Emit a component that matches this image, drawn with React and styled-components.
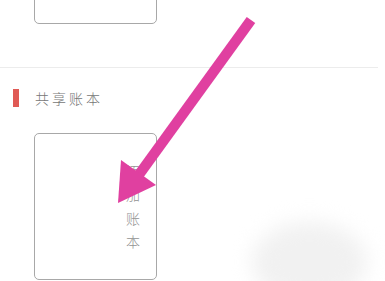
import React from 'react';
import styled, { createGlobalStyle } from 'styled-components';

const GlobalStyle = createGlobalStyle`
  html, body {
    margin: 0;
    padding: 0;
    background: #fff;
    overflow: hidden;
  }
  body {
    font-family: "Noto Sans CJK SC", "Noto Sans", sans-serif;
  }
`;

const Page = styled.div`
  position: relative;
  width: 385px;
  height: 281px;
  overflow: hidden;
  background: #fff;
`;

const Section = styled.section`
  width: 378px;
  padding-left: 34px;
  box-sizing: border-box;
  border-bottom: ${p => (p.$divider ? '1px solid #ececec' : 'none')};
  padding-bottom: ${p => p.$bottom || 0}px;
`;

const BookCard = styled.div`
  width: 123px;
  height: ${p => p.$height}px;
  margin-top: ${p => p.$top}px;
  border: 1px solid #a8a8a8;
  border-radius: 5px;
  box-sizing: border-box;
  display: flex;
  justify-content: flex-end;
  align-items: center;
  padding-right: 16px;
`;

const VerticalLabel = styled.div`
  display: flex;
  flex-direction: column;
  align-items: center;
  font-size: 14px;
  font-weight: 300;
  line-height: 23.5px;
  color: #939393;
`;

const GroupHeader = styled.div`
  display: flex;
  align-items: center;
  height: 18px;
  margin: 21px 0 0 13px;
`;

const Marker = styled.span`
  width: 6px;
  height: 18px;
  background: #e05a55;
`;

const GroupTitle = styled.span`
  margin-left: 16px;
  font-size: 14px;
  font-weight: 300;
  letter-spacing: 3px;
  color: #767676;
`;

const Blur = styled.div`
  position: absolute;
  left: 252px;
  top: 222px;
  width: 115px;
  height: 80px;
  border-radius: 50%;
  background: #f1f1f1;
  filter: blur(10px);
`;

const Overlay = styled.svg`
  position: absolute;
  left: 0;
  top: 0;
  pointer-events: none;
`;

export default function App() {
  return (
    <Page>
      <GlobalStyle />
      <Section $divider $bottom={43}>
        <BookCard $height={60} $top={-36} />
      </Section>
      <GroupHeader>
        <Marker />
        <GroupTitle>共享账本</GroupTitle>
      </GroupHeader>
      <Section>
        <BookCard $height={147} $top={26}>
          <VerticalLabel>
            <span>添</span>
            <span>加</span>
            <span>账</span>
            <span>本</span>
          </VerticalLabel>
        </BookCard>
      </Section>
      <Blur />
      <Overlay width="385" height="281" viewBox="0 0 385 281">
        <line x1="251" y1="20" x2="138" y2="176" stroke="#e040a0" strokeWidth="10.5" />
        <polygon points="118,203 121,160 156,185" fill="#e040a0" />
      </Overlay>
    </Page>
  );
}
